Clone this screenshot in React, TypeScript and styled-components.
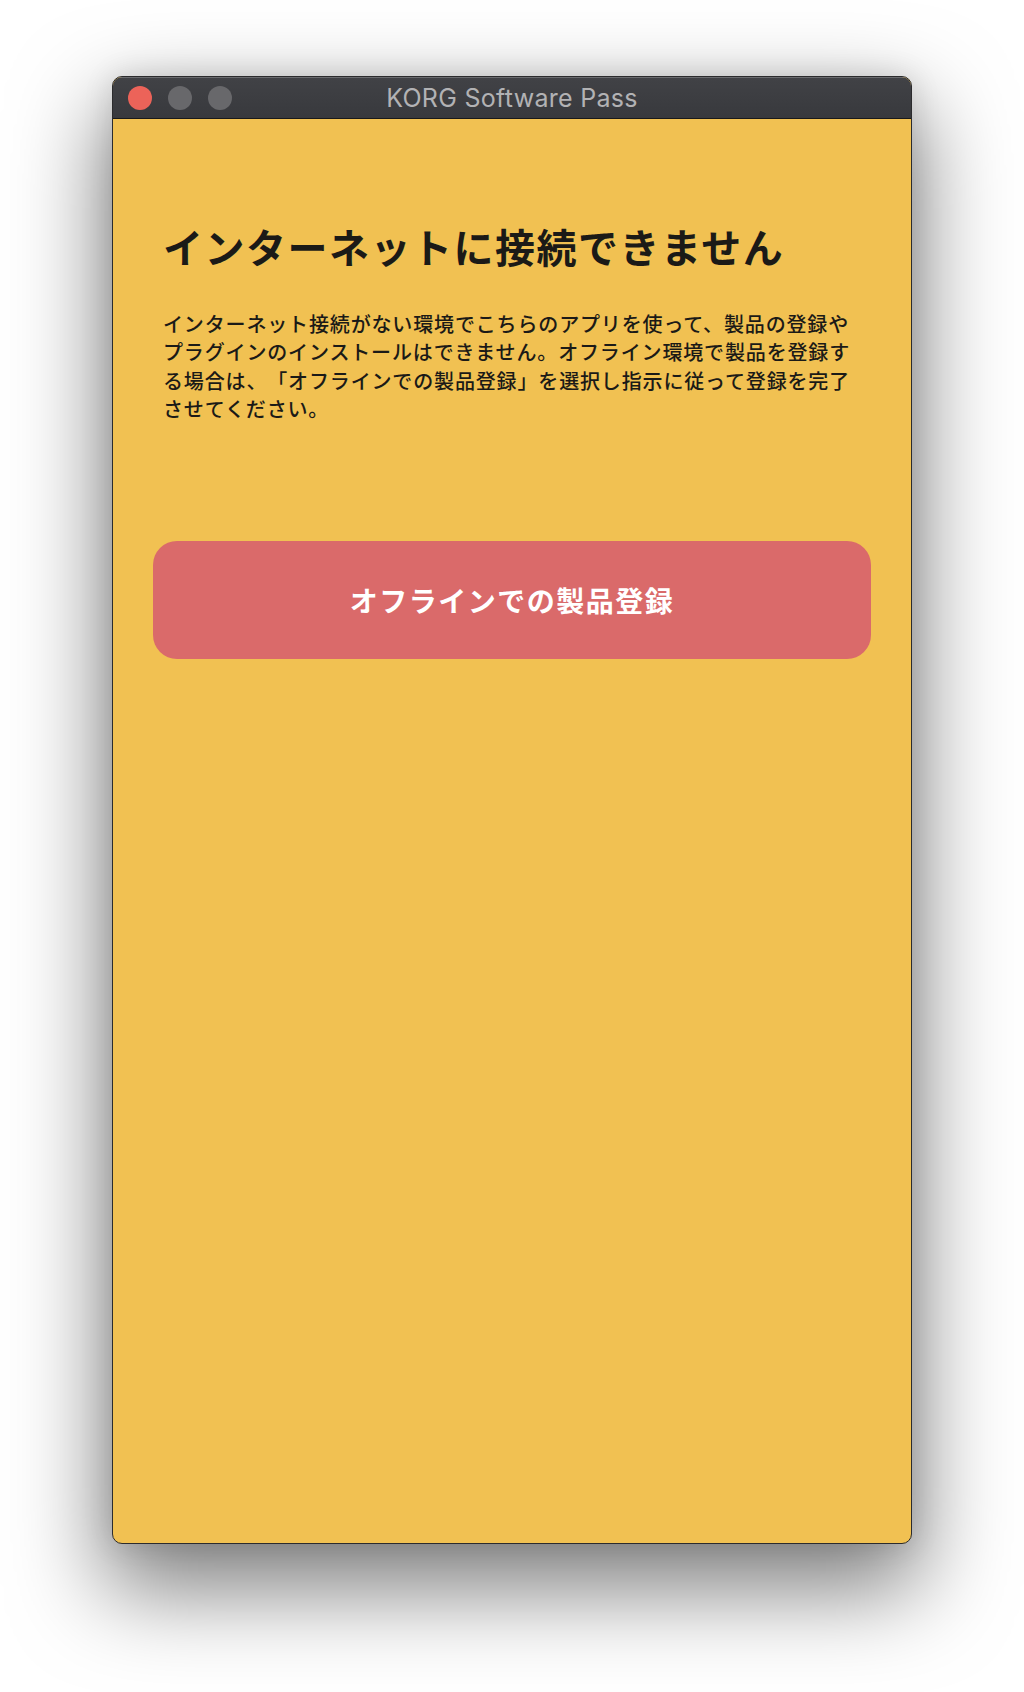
import styled, { createGlobalStyle } from "styled-components";

const GlobalStyle = createGlobalStyle`
  html, body {
    margin: 0;
    padding: 0;
    background: #ffffff;
  }
  * {
    box-sizing: border-box;
  }
`;

const Desktop = styled.div`
  width: 1024px;
  height: 1692px;
  display: flex;
  justify-content: center;
  align-items: flex-start;
  padding-top: 76px;
  background: #ffffff;
  overflow: hidden;
`;

const Window = styled.div`
  width: 800px;
  height: 1468px;
  display: flex;
  flex-direction: column;
  border: 1px solid #2b2b2d;
  border-radius: 10px;
  overflow: hidden;
  background: #f1c152;
  box-shadow: 0 38px 90px 8px rgba(0, 0, 0, 0.5),
    0 0 30px rgba(0, 0, 0, 0.12);
`;

const TitleBar = styled.div`
  height: 42px;
  flex: 0 0 42px;
  display: grid;
  grid-template-columns: 1fr auto 1fr;
  align-items: center;
  padding: 0 15px;
  background: linear-gradient(#414246, #38393d);
  border-bottom: 1px solid #19191a;
  box-shadow: inset 0 1px 0 rgba(255, 255, 255, 0.22);
`;

const Lights = styled.div`
  display: flex;
  gap: 16px;
`;

const Light = styled.span<{ color: string }>`
  width: 24px;
  height: 24px;
  border-radius: 50%;
  background: ${({ color }) => color};
`;

const Title = styled.div`
  font-family: Inter, "Liberation Sans", sans-serif;
  font-size: 25px;
  color: #b2b2b4;
  letter-spacing: 0.3px;
  white-space: nowrap;
`;

const Content = styled.div`
  flex: 1;
  display: flex;
  flex-direction: column;
  padding: 103px 40px 0;
  font-family: "Noto Sans CJK JP", "Noto Sans", sans-serif;
  color: #1b1a17;
  text-spacing-trim: space-all;
`;

const Heading = styled.h1`
  margin: 0;
  padding: 0 10px;
  font-size: 40px;
  line-height: 48px;
  font-weight: 700;
  letter-spacing: 1.5px;
`;

const Message = styled.p`
  margin: 40px 0 0;
  padding: 0 10px;
  font-size: 20px;
  line-height: 28.4px;
  font-weight: 500;
  letter-spacing: 0.85px;
`;

const OfflineButton = styled.button`
  margin-top: 117px;
  height: 118px;
  width: 100%;
  border: none;
  border-radius: 24px;
  background: #da6a6a;
  color: #ffffff;
  font-family: "Noto Sans CJK JP", "Noto Sans", sans-serif;
  font-size: 28px;
  font-weight: 700;
  letter-spacing: 1.5px;
  cursor: pointer;
`;

export default function App() {
  return (
    <>
      <GlobalStyle />
      <Desktop>
        <Window>
          <TitleBar>
            <Lights>
              <Light color="#ec6359" />
              <Light color="#68686b" />
              <Light color="#68686b" />
            </Lights>
            <Title>KORG Software Pass</Title>
            <span />
          </TitleBar>
          <Content>
            <Heading>インターネットに接続できません</Heading>
            <Message>
              インターネット接続がない環境でこちらのアプリを使って、製品の登録やプラグインのインストールはできません。オフライン環境で製品を登録する場合は、「オフラインでの製品登録」を選択し指示に従って登録を完了させてください。
            </Message>
            <OfflineButton>オフラインでの製品登録</OfflineButton>
          </Content>
        </Window>
      </Desktop>
    </>
  );
}
